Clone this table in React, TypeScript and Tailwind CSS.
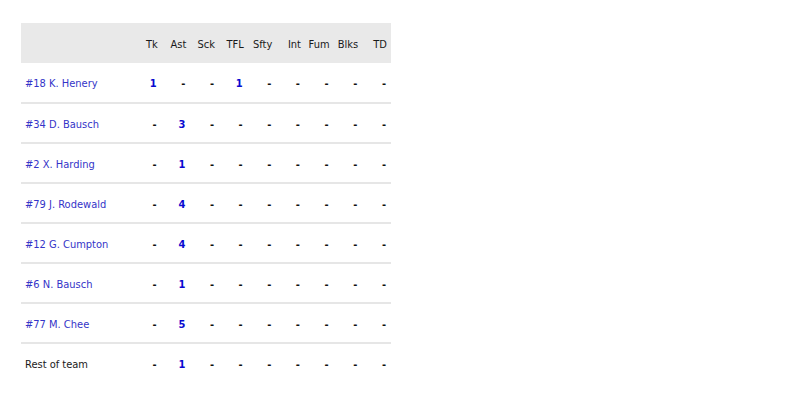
const cols = ["Tk", "Ast", "Sck", "TFL", "Sfty", "Int", "Fum", "Blks", "TD"];

type Row = { name: string; link: boolean; stats: (number | null)[] };

const rows: Row[] = [
  { name: "#18 K. Henery", link: true, stats: [1, null, null, 1, null, null, null, null, null] },
  { name: "#34 D. Bausch", link: true, stats: [null, 3, null, null, null, null, null, null, null] },
  { name: "#2 X. Harding", link: true, stats: [null, 1, null, null, null, null, null, null, null] },
  { name: "#79 J. Rodewald", link: true, stats: [null, 4, null, null, null, null, null, null, null] },
  { name: "#12 G. Cumpton", link: true, stats: [null, 4, null, null, null, null, null, null, null] },
  { name: "#6 N. Bausch", link: true, stats: [null, 1, null, null, null, null, null, null, null] },
  { name: "#77 M. Chee", link: true, stats: [null, 5, null, null, null, null, null, null, null] },
  { name: "Rest of team", link: false, stats: [null, 1, null, null, null, null, null, null, null] },
];

export default function App() {
  return (
    <div className="h-[410px] w-[800px] bg-white pl-[21px] pt-[23px] font-['DejaVu_Sans_Condensed','DejaVu_Sans',sans-serif] text-[11px]">
      <table className="w-[370px] table-fixed border-collapse">
        <colgroup>
          <col className="w-[112px]" />
          {cols.map((c) => (
            <col key={c} className="w-[28.67px]" />
          ))}
        </colgroup>
        <thead>
          <tr className="h-[40px] bg-[#e9e9e9]">
            <th />
            {cols.map((c) => (
              <th key={c} className="pr-[4px] pt-[4px] text-right font-normal text-[#1a1a1a]">
                {c}
              </th>
            ))}
          </tr>
        </thead>
        <tbody>
          {rows.map((r, i) => (
            <tr key={r.name} className={`h-[40px] ${i < rows.length - 1 ? "border-b-2 border-[#e6e6e6]" : ""}`}>
              <td className={`pl-[4px] pt-[4px] ${r.link ? "text-[#3434c8]" : "text-[#1a1a1a]"}`}>{r.name}</td>
              {r.stats.map((s, j) => (
                <td key={j} className="pr-[5px] pt-[4px] text-right font-bold">
                  {s === null ? <span className="text-[#111]">-</span> : <span className="text-[#0a0ad0]">{s}</span>}
                </td>
              ))}
            </tr>
          ))}
        </tbody>
      </table>
    </div>
  );
}
